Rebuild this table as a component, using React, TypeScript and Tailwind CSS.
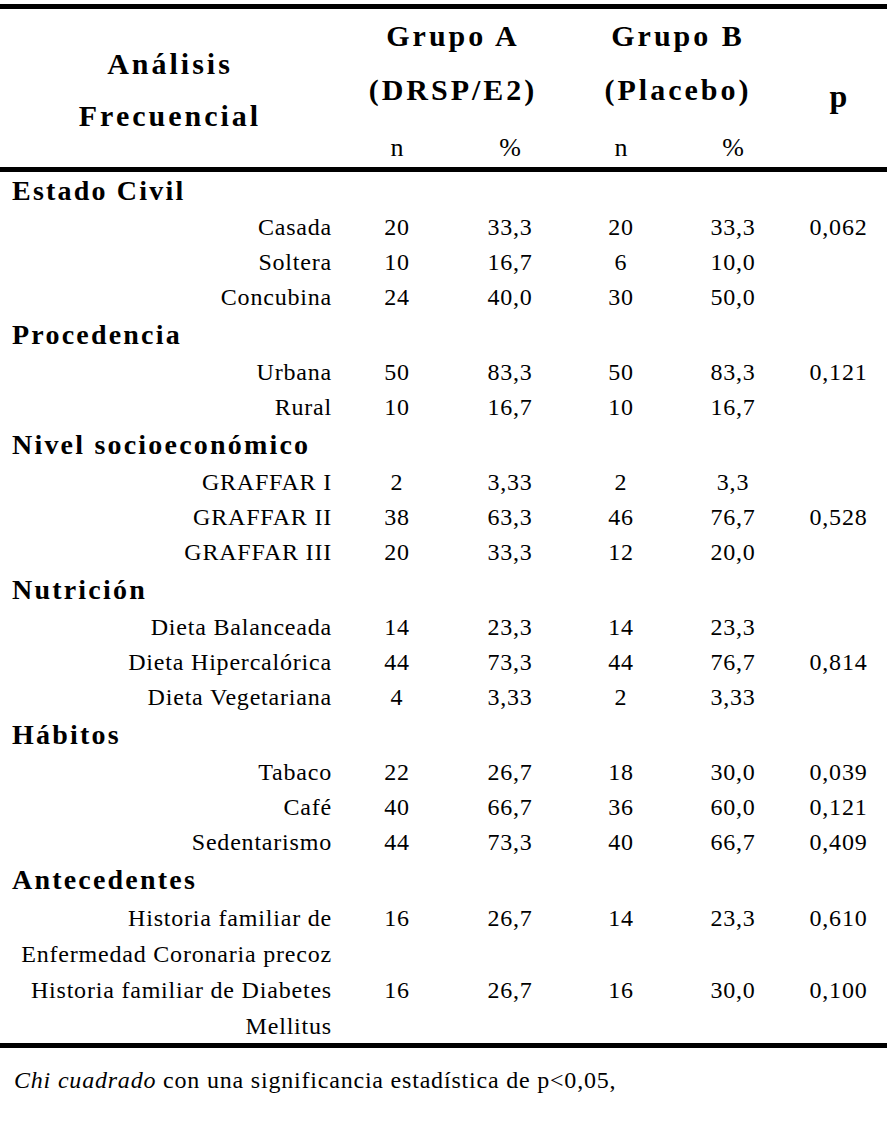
import React from "react";

type Row = { label: string[]; a: string; ap: string; b: string; bp: string; p: string };
type Section = { title: string; rows: Row[]; tall?: boolean; first?: boolean };

const sections: Section[] = [
  {
    title: "Estado Civil",
    first: true,
    rows: [
      { label: ["Casada"], a: "20", ap: "33,3", b: "20", bp: "33,3", p: "0,062" },
      { label: ["Soltera"], a: "10", ap: "16,7", b: "6", bp: "10,0", p: "" },
      { label: ["Concubina"], a: "24", ap: "40,0", b: "30", bp: "50,0", p: "" },
    ],
  },
  {
    title: "Procedencia",
    rows: [
      { label: ["Urbana"], a: "50", ap: "83,3", b: "50", bp: "83,3", p: "0,121" },
      { label: ["Rural"], a: "10", ap: "16,7", b: "10", bp: "16,7", p: "" },
    ],
  },
  {
    title: "Nivel socioeconómico",
    rows: [
      { label: ["GRAFFAR I"], a: "2", ap: "3,33", b: "2", bp: "3,3", p: "" },
      { label: ["GRAFFAR II"], a: "38", ap: "63,3", b: "46", bp: "76,7", p: "0,528" },
      { label: ["GRAFFAR III"], a: "20", ap: "33,3", b: "12", bp: "20,0", p: "" },
    ],
  },
  {
    title: "Nutrición",
    rows: [
      { label: ["Dieta Balanceada"], a: "14", ap: "23,3", b: "14", bp: "23,3", p: "" },
      { label: ["Dieta Hipercalórica"], a: "44", ap: "73,3", b: "44", bp: "76,7", p: "0,814" },
      { label: ["Dieta Vegetariana"], a: "4", ap: "3,33", b: "2", bp: "3,33", p: "" },
    ],
  },
  {
    title: "Hábitos",
    rows: [
      { label: ["Tabaco"], a: "22", ap: "26,7", b: "18", bp: "30,0", p: "0,039" },
      { label: ["Café"], a: "40", ap: "66,7", b: "36", bp: "60,0", p: "0,121" },
      { label: ["Sedentarismo"], a: "44", ap: "73,3", b: "40", bp: "66,7", p: "0,409" },
    ],
  },
  {
    title: "Antecedentes",
    tall: true,
    rows: [
      { label: ["Historia familiar de", "Enfermedad Coronaria precoz"], a: "16", ap: "26,7", b: "14", bp: "23,3", p: "0,610" },
      { label: ["Historia familiar de Diabetes", "Mellitus"], a: "16", ap: "26,7", b: "16", bp: "30,0", p: "0,100" },
    ],
  },
];

const grid = "grid grid-cols-[340px_114px_112px_110px_114px_97px]";

function DataRow({ r, tall }: { r: Row; tall?: boolean }) {
  if (tall) {
    return (
      <div className={grid + " leading-[36px]"}>
        <div className="text-right pr-[8px]">
          {r.label.map((l, i) => (
            <div key={i}>{l}</div>
          ))}
        </div>
        <div className="text-center">{r.a}</div>
        <div className="text-center">{r.ap}</div>
        <div className="text-center">{r.b}</div>
        <div className="text-center">{r.bp}</div>
        <div className="text-center">{r.p}</div>
      </div>
    );
  }
  return (
    <div className={grid + " h-[35px] items-center leading-[35px]"}>
      <div className="text-right pr-[8px]">{r.label[0]}</div>
      <div className="text-center">{r.a}</div>
      <div className="text-center">{r.ap}</div>
      <div className="text-center">{r.b}</div>
      <div className="text-center">{r.bp}</div>
      <div className="text-center">{r.p}</div>
    </div>
  );
}

export default function App() {
  return (
    <div
      className="w-[889px] h-[1121px] bg-white text-black pt-[4px]"
      style={{ fontFamily: '"Liberation Serif", "Times New Roman", serif' }}
    >
      <div className="w-[887px]">
        <div className="h-[5px] bg-black" />
        {/* Header */}
        <div className="flex h-[158px] font-bold text-[30px] tracking-[3px]">
          <div className="w-[340px] flex flex-col items-center justify-center pt-[4px] leading-[52px]">
            <div>Análisis</div>
            <div>Frecuencial</div>
          </div>
          <div className="w-[226px] flex flex-col">
            <div className="text-center leading-[54px]">Grupo A</div>
            <div className="text-center leading-[54px]">(DRSP/E2)</div>
            <div className="grid grid-cols-[114px_112px] mt-[13px] leading-[36px] font-normal text-[26px] tracking-normal">
              <div className="text-center">n</div>
              <div className="text-center">%</div>
            </div>
          </div>
          <div className="w-[224px] flex flex-col">
            <div className="text-center leading-[54px]">Grupo B</div>
            <div className="text-center leading-[54px]">(Placebo)</div>
            <div className="grid grid-cols-[110px_114px] mt-[13px] leading-[36px] font-normal text-[26px] tracking-normal">
              <div className="text-center">n</div>
              <div className="text-center">%</div>
            </div>
          </div>
          <div className="w-[97px] flex items-center justify-center pt-[16px] text-[32px] tracking-normal">
            p
          </div>
        </div>
        <div className="h-[5px] bg-black" />
        {/* Body */}
        <div className="text-[24px] tracking-[0.8px]">
          {sections.map((s) => (
            <div key={s.title}>
              <div
                className={
                  (s.first ? "h-[38px]" : "h-[40px]") +
                  " flex items-center pl-[12px] font-bold text-[28px] tracking-[2.2px]"
                }
              >
                {s.title}
              </div>
              {s.rows.map((r, i) => (
                <DataRow key={i} r={r} tall={s.tall} />
              ))}
            </div>
          ))}
        </div>
        <div className="h-[5px] bg-black mt-[-1px]" />
        <div className="mt-[14px] pl-[14px] text-[24px] tracking-[0.8px] leading-[36px]">
          <i>Chi cuadrado</i> con una significancia estadística de p&lt;0,05,
        </div>
      </div>
    </div>
  );
}
